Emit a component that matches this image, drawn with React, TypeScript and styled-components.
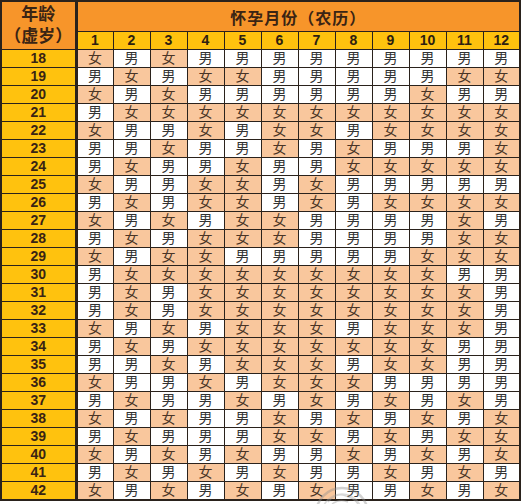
import React from 'react';
import styled, { createGlobalStyle } from 'styled-components';

const GlobalStyle = createGlobalStyle`
  html, body {
    margin: 0;
    padding: 0;
    background: #ffffff;
  }
  body {
    font-family: "Liberation Sans", "Noto Sans CJK SC", sans-serif;
  }
`;

const M = '男';
const F = '女';

// 年龄(虚岁) -> 12 个农历月份
const chart: [number, string][] = [
  [18, '女男女男男男男男男男男男'],
  [19, '男女男女女男男男男男女女'],
  [20, '女男女男男男男男男女男男'],
  [21, '男女女女女女女女女女女女'],
  [22, '女男男女男女女男女女女女'],
  [23, '男男女男男女男女男男男女'],
  [24, '男女男男女男男女女女女女'],
  [25, '女男男女女男女男男男男男'],
  [26, '男女男女女男女男女女女女'],
  [27, '女男女男女女男男男男女男'],
  [28, '男女男女女女男男男男女女'],
  [29, '女男女女男男男男男女女女'],
  [30, '男女女女女女女女女女男男'],
  [31, '男女男女女女女女女女女男'],
  [32, '男女男女女女女女女女女男'],
  [33, '女男女男女女女男女女女男'],
  [34, '男女男女女女女女女女男男'],
  [35, '男男女男女女女男女女男男'],
  [36, '女男男女男女女女男男男男'],
  [37, '男女男男女男女男女男女男'],
  [38, '女男女男男女男女男女男女'],
  [39, '男女男男男女女男女男女女'],
  [40, '女男女男女男男女男女男女'],
  [41, '男女男女男女男男女男女男'],
  [42, '女男女男女男女男男女男女'],
];

const months = Array.from({ length: 12 }, (_, i) => i + 1);

const Page = styled.div`
  position: relative;
  width: 523px;
  height: 504px;
  overflow: hidden;
`;

const Table = styled.table`
  border-collapse: collapse;
  table-layout: fixed;
  width: 521px;
  border: 2px solid #2a221c;
`;

const AgeHead = styled.th`
  width: 72px;
  padding: 0;
  background: #f7952a;
  border-right: 3px solid #2a221c;
  color: #3a2414;
  font-size: 17px;
  font-weight: 700;
  line-height: 22px;
  vertical-align: middle;
`;

const TitleCell = styled.th`
  height: 29px;
  padding: 0;
  background: #f7952a;
  border: 1px solid #2a221c;
  color: #3a2414;
  font-size: 16px;
  font-weight: 700;
  letter-spacing: 1px;
`;

const MonthCell = styled.th`
  height: 17px;
  padding: 0;
  background: #ffc20e;
  border: 1px solid #2a221c;
  color: #2e2010;
  font-size: 14px;
  font-weight: 700;
  line-height: 17px;
`;

const AgeCell = styled.th`
  height: 17px;
  padding: 0;
  background: #ffc20e;
  border: 1px solid #2a221c;
  border-right: 3px solid #2a221c;
  color: #3a2414;
  font-size: 14px;
  font-weight: 700;
  line-height: 17px;
`;

const GenderCell = styled.td<{ $girl: boolean }>`
  height: 17px;
  padding: 0;
  text-align: center;
  background: ${(p) => (p.$girl ? '#f9c79d' : '#ffffff')};
  border: 1px solid #2a221c;
  color: ${(p) => (p.$girl ? '#4a3526' : '#333333')};
  font-size: 14px;
  line-height: 17px;
`;

const Watermark = styled.svg`
  position: absolute;
  left: 312px;
  top: 484px;
  opacity: 0.4;
  pointer-events: none;
`;

export default function App() {
  return (
    <>
      <GlobalStyle />
      <Page>
        <Table>
          <colgroup>
            <col style={{ width: 75 }} />
            {months.map((m) => (
              <col key={m} />
            ))}
          </colgroup>
          <thead>
            <tr>
              <AgeHead rowSpan={2}>
                年龄
                <br />
                （虚岁）
              </AgeHead>
              <TitleCell colSpan={12}>怀孕月份（农历）</TitleCell>
            </tr>
            <tr>
              {months.map((m) => (
                <MonthCell key={m}>{m}</MonthCell>
              ))}
            </tr>
          </thead>
          <tbody>
            {chart.map(([age, row]) => (
              <tr key={age}>
                <AgeCell>{age}</AgeCell>
                {row.split('').map((g, i) => (
                  <GenderCell key={i} $girl={g === F}>
                    {g === F ? F : M}
                  </GenderCell>
                ))}
              </tr>
            ))}
          </tbody>
        </Table>
        <Watermark width="64" height="20" viewBox="0 0 64 20">
          <circle cx="30" cy="30" r="26" fill="none" stroke="#8f8f8f" strokeWidth="2.5" />
          <circle cx="30" cy="30" r="20" fill="none" stroke="#a8a8a8" strokeWidth="1.5" />
          <path d="M16 18 Q24 8 34 12 Q42 14 46 20 M20 20 Q28 14 36 18" fill="none" stroke="#9a9a9a" strokeWidth="1.5" />
        </Watermark>
      </Page>
    </>
  );
}
